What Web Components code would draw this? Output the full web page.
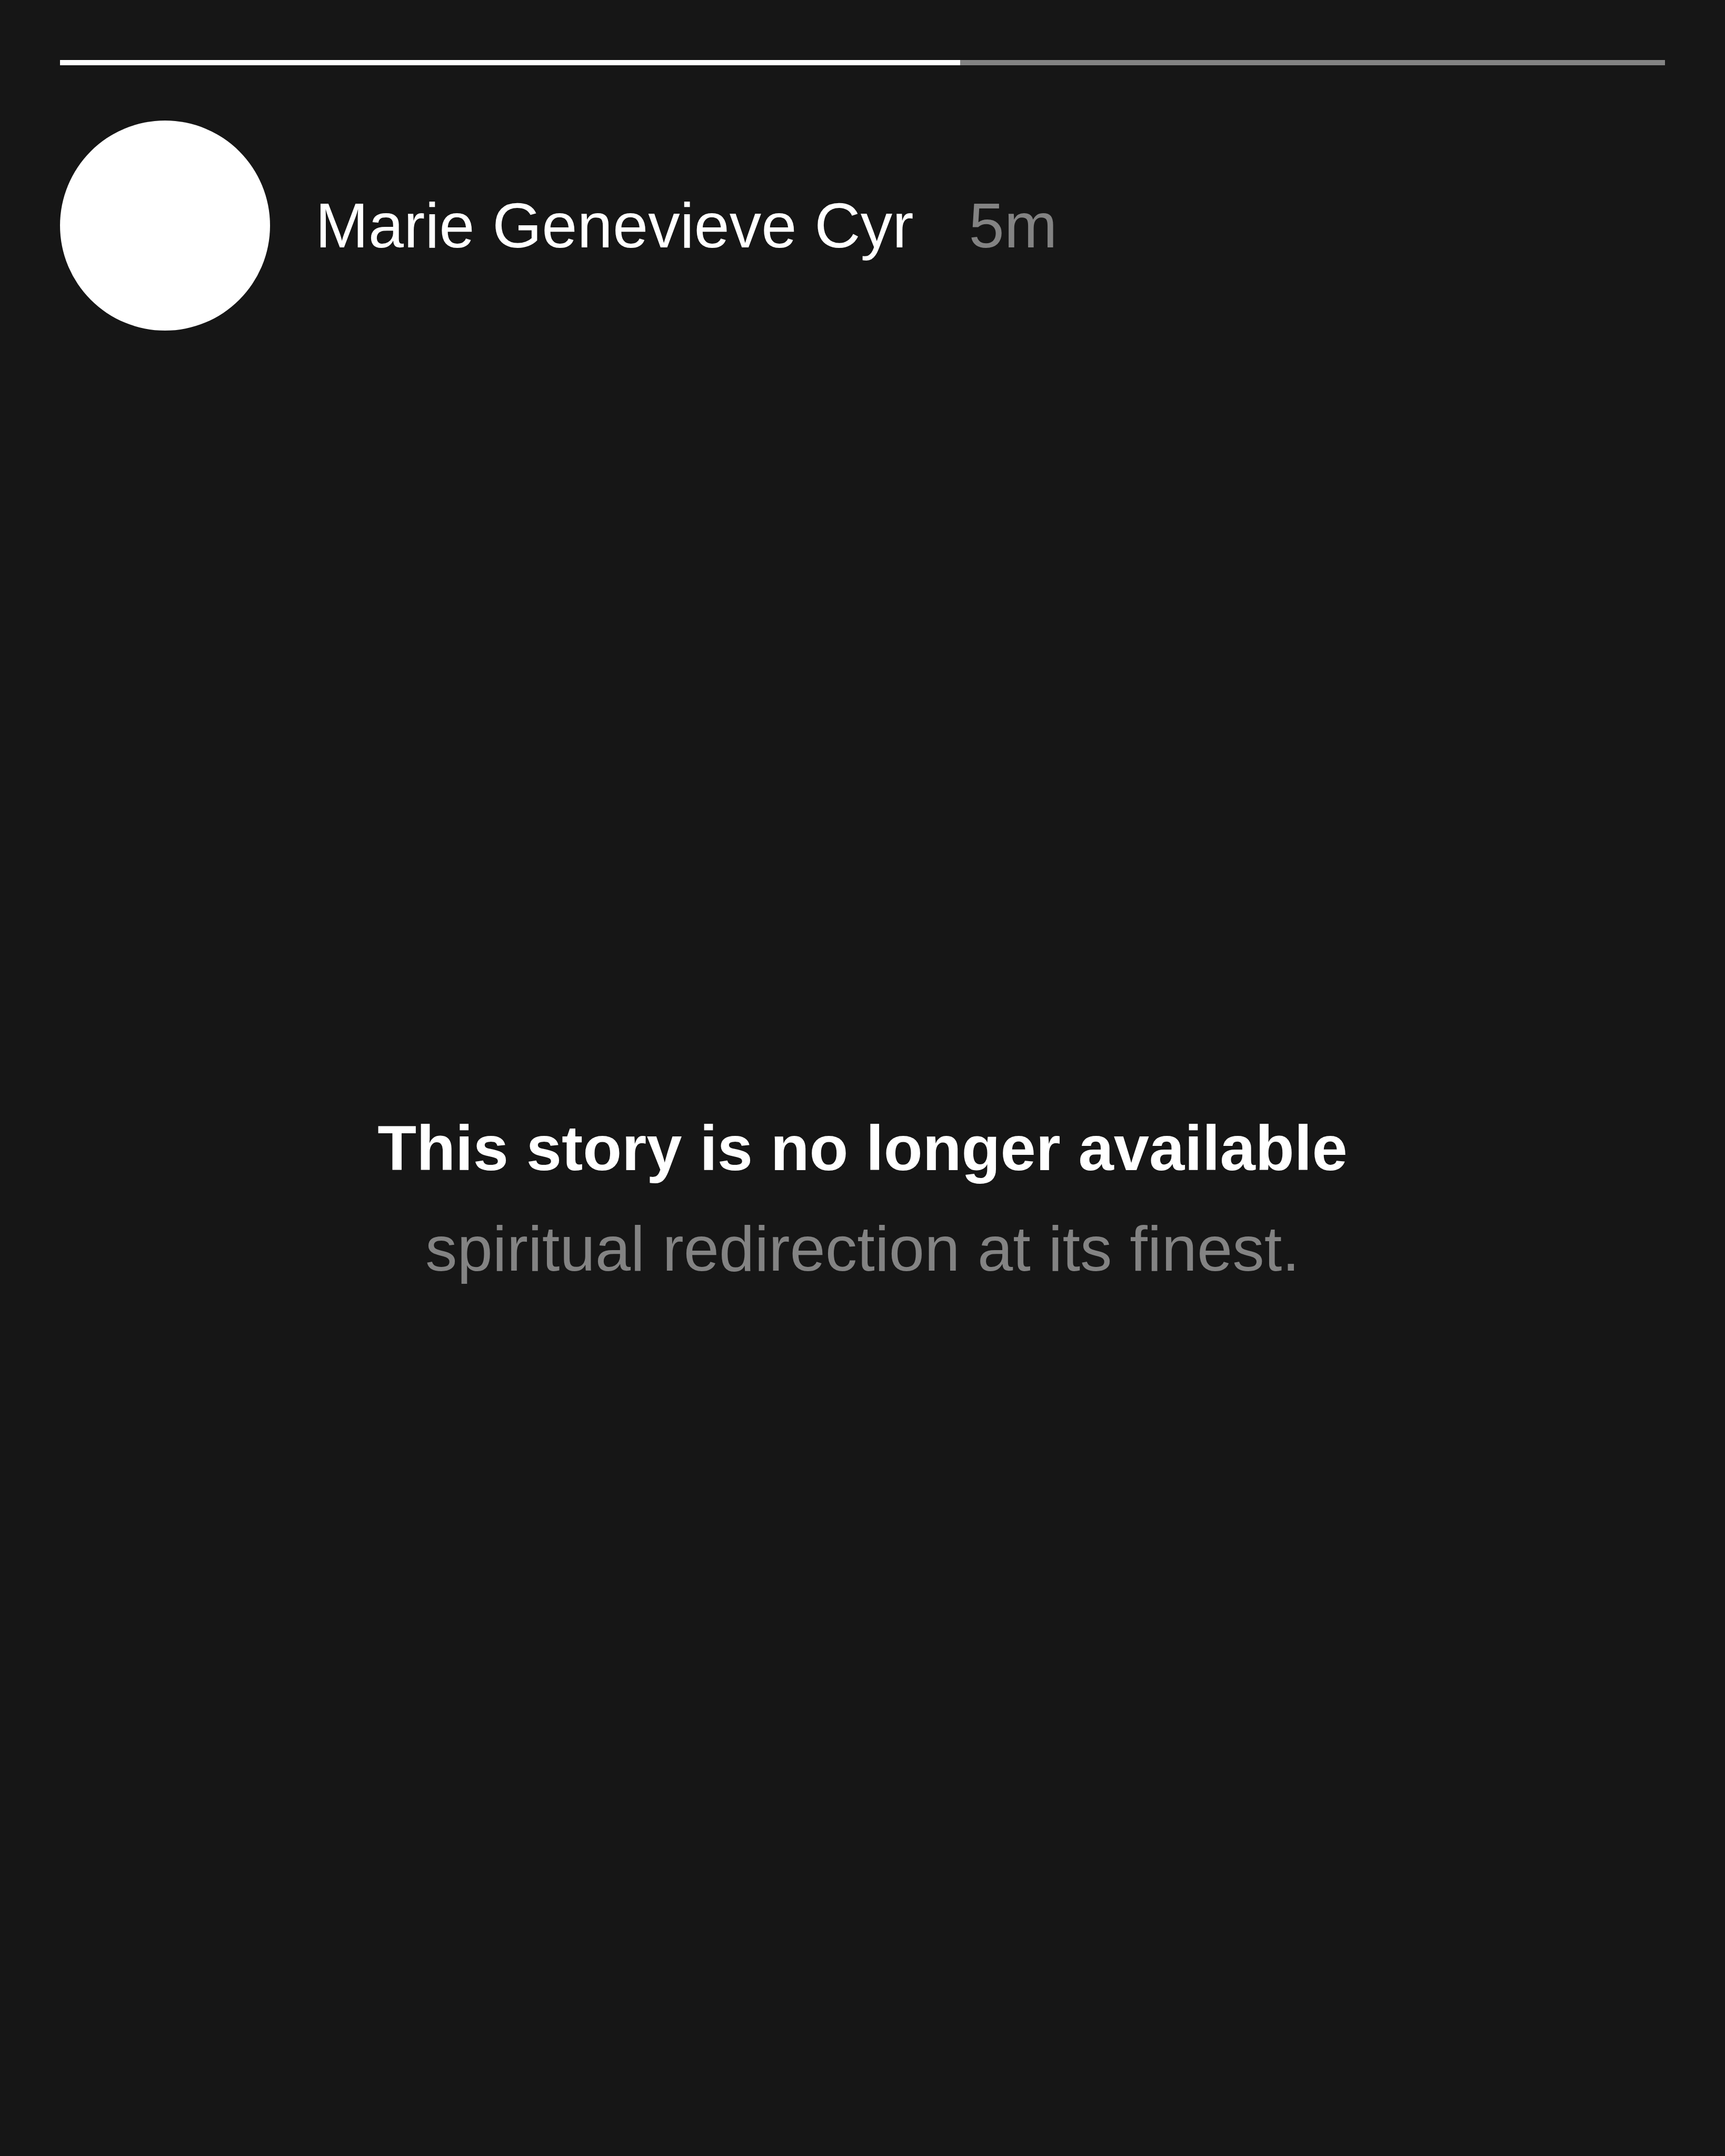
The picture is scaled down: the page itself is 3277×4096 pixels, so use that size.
<!DOCTYPE html>
<html lang="en">
<head>
<meta charset="utf-8">
<meta name="viewport" content="width=device-width, initial-scale=1">
<title>Story</title>
<style>
  body {
    margin: 0;
    background: #161616;
    color: #fff;
    font-family: "Liberation Sans", Helvetica, Arial, sans-serif;
    font-size: 121px;
    line-height: 191px;
    --muted: #838383;
  }
</style>
</head>
<body>
<story-view>
  <story-progress slot="progress" value="56.1"></story-progress>
  <story-author slot="author">Marie Genevieve Cyr<span slot="time">5m</span></story-author>
  <story-notice>This story is no longer available<span slot="detail">spiritual redirection at its finest.</span></story-notice>
</story-view>

<template id="story-view">
  <style>
    :host {
      display: flex;
      flex-direction: column;
      box-sizing: border-box;
      min-height: 100vh;
      padding: 114px 114px 171px;
    }
    header { display: flex; flex-direction: column; gap: 105px; }
    main { flex: 1; display: flex; flex-direction: column; justify-content: center; }
  </style>
  <header><slot name="progress"></slot><slot name="author"></slot></header>
  <main><slot></slot></main>
</template>

<template id="story-progress">
  <style>
    :host { display: block; height: 10px; background: var(--muted); }
    .fill { height: 100%; background: #fff; }
  </style>
  <div class="fill"></div>
</template>

<template id="story-author">
  <style>
    :host { display: flex; align-items: center; gap: 86px; }
    .avatar { flex: none; width: 399px; height: 399px; border-radius: 50%; background: #fff; }
    .byline { display: flex; align-items: baseline; gap: 105px; white-space: nowrap; }
    .time { color: var(--muted); }
  </style>
  <div class="avatar"></div>
  <div class="byline">
    <div><slot></slot></div>
    <div class="time"><slot name="time"></slot></div>
  </div>
</template>

<template id="story-notice">
  <style>
    :host { display: block; text-align: center; }
    h1, p { margin: 0; font-size: inherit; }
    p { color: var(--muted); }
  </style>
  <h1><slot></slot></h1>
  <p><slot name="detail"></slot></p>
</template>

<script>
  class TemplateElement extends HTMLElement {
    constructor() {
      super();
      const template = document.getElementById(this.localName);
      this.attachShadow({ mode: "open" }).append(template.content.cloneNode(true));
    }
  }

  class StoryProgress extends TemplateElement {
    static observedAttributes = ["value"];
    connectedCallback() {
      this.setAttribute("role", "progressbar");
      this.setAttribute("aria-label", "Story progress");
    }
    attributeChangedCallback(name, previous, value) {
      this.shadowRoot.querySelector(".fill").style.width = value + "%";
      this.setAttribute("aria-valuenow", value);
    }
  }

  customElements.define("story-progress", StoryProgress);
  customElements.define("story-author", class extends TemplateElement {});
  customElements.define("story-notice", class extends TemplateElement {});
  customElements.define("story-view", class extends TemplateElement {});
</script>
</body>
</html>
